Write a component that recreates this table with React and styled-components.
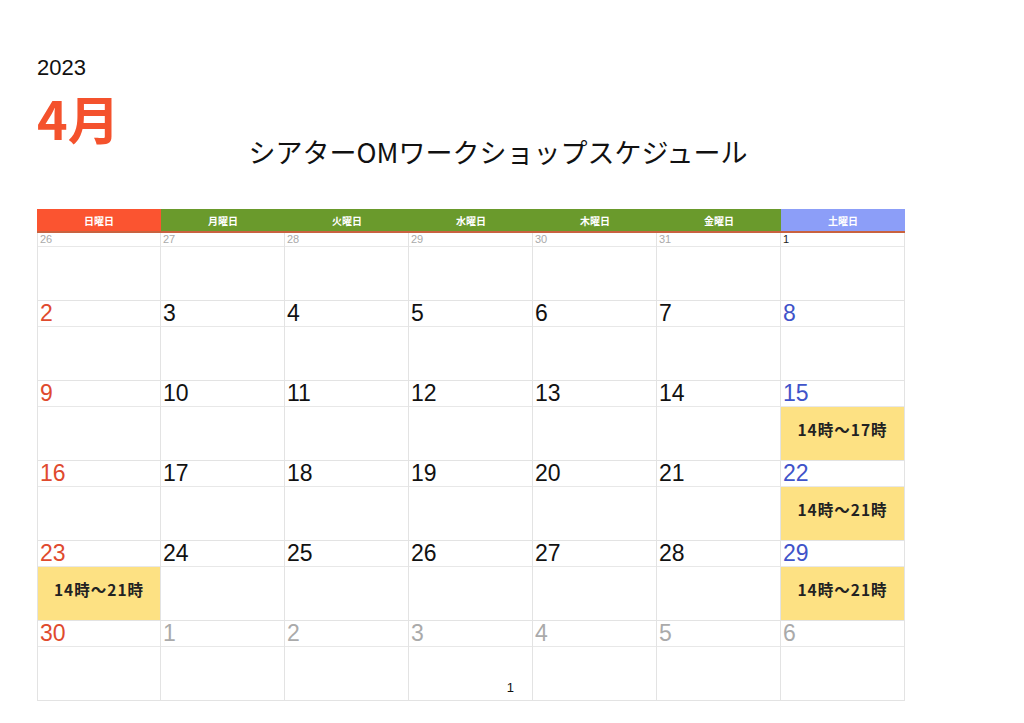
import styled, { createGlobalStyle } from "styled-components";

const GlobalStyle = createGlobalStyle`
  body {
    margin: 0;
    background: #ffffff;
    font-family: "Liberation Sans", "Noto Sans CJK JP", sans-serif;
  }
`;

const Page = styled.div`
  width: 1024px;
  height: 723px;
  padding: 54px 0 0 37px;
  box-sizing: border-box;
  overflow: hidden;
`;

const Year = styled.div`
  font-size: 22px;
  line-height: 28px;
  color: #111;
`;

const Month = styled.div`
  font-family: "Noto Sans CJK JP", sans-serif;
  font-size: 52px;
  font-weight: 700;
  line-height: 60px;
  color: #f4522d;
  margin-top: 6px;
  height: 30px;
`;

const Title = styled.h1`
  margin: 16px 0 0;
  width: 922px;
  text-align: center;
  font-family: "Noto Sans CJK JP", sans-serif;
  font-size: 27px;
  font-weight: 400;
  line-height: 36px;
  color: #111;
`;

const Calendar = styled.div`
  margin-top: 39px;
  width: 868px;
  display: grid;
  grid-template-columns: repeat(7, 124px);
`;

const HeadCell = styled.div`
  height: 22px;
  background: ${(p) => p.bg};
  border-bottom: 2px solid #c9623f;
  color: #fff;
  font-family: "Noto Sans CJK JP", sans-serif;
  font-size: 10px;
  font-weight: 700;
  display: flex;
  align-items: center;
  justify-content: center;
`;

const Cell = styled.div`
  display: flex;
  flex-direction: column;
  border-right: 1px solid #e3e3e3;
  border-bottom: 1px solid #e3e3e3;
  border-left: ${(p) => (p.first ? "1px solid #e3e3e3" : "none")};
`;

const DateRow = styled.div`
  height: ${(p) => (p.small ? "13px" : "25px")};
  border-bottom: 1px solid #e8e8e8;
  padding-left: 2px;
  font-size: ${(p) => (p.small ? "11px" : "23px")};
  line-height: ${(p) => (p.small ? "13px" : "25px")};
  color: ${(p) => p.color};
`;

const EventArea = styled.div`
  height: 53px;
  box-sizing: border-box;
  padding-bottom: 10px;
  background: ${(p) => (p.event ? "#fde183" : "transparent")};
  display: flex;
  align-items: center;
  justify-content: center;
  position: relative;
  font-family: "Noto Sans CJK JP", sans-serif;
  font-size: 15.5px;
  letter-spacing: 1px;
  font-weight: 700;
  color: #222;
`;

const PageNum = styled.span`
  position: absolute;
  right: 18px;
  bottom: 5px;
  font-family: "Liberation Sans", sans-serif;
  font-size: 13px;
  font-weight: 400;
  letter-spacing: 0;
  color: #111;
`;

const heads = [
  { label: "日曜日", bg: "#fb5430" },
  { label: "月曜日", bg: "#6a9a2c" },
  { label: "火曜日", bg: "#6a9a2c" },
  { label: "水曜日", bg: "#6a9a2c" },
  { label: "木曜日", bg: "#6a9a2c" },
  { label: "金曜日", bg: "#6a9a2c" },
  { label: "土曜日", bg: "#8c9ef8" },
];

const weeks = [
  [26, 27, 28, 29, 30, 31, 1],
  [2, 3, 4, 5, 6, 7, 8],
  [9, 10, 11, 12, 13, 14, 15],
  [16, 17, 18, 19, 20, 21, 22],
  [23, 24, 25, 26, 27, 28, 29],
  [30, 1, 2, 3, 4, 5, 6],
];

const events = {
  15: "14時〜17時",
  22: "14時〜21時",
  23: "14時〜21時",
  29: "14時〜21時",
};

const dayColor = (w, d) => {
  if (w === 0) return d === 6 ? "#222" : "#aaa";
  if (w === 5 && d > 0) return "#aaa";
  if (d === 0) return "#df4a2e";
  if (d === 6) return "#4053c9";
  return "#111";
};

export default function App() {
  return (
    <Page>
      <GlobalStyle />
      <Year>2023</Year>
      <Month>4月</Month>
      <Title>シアターOMワークショップスケジュール</Title>
      <Calendar>
        {heads.map((h) => (
          <HeadCell key={h.label} bg={h.bg}>
            {h.label}
          </HeadCell>
        ))}
        {weeks.map((week, w) =>
          week.map((n, d) => {
            const inMonth = !(w === 0 && d < 6) && !(w === 5 && d > 0);
            const ev = inMonth ? events[n] : null;
            return (
              <Cell key={`${w}-${d}`} first={d === 0}>
                <DateRow small={w === 0} color={dayColor(w, d)}>
                  {n}
                </DateRow>
                <EventArea event={!!ev}>
                  {ev}
                  {w === 5 && d === 3 && <PageNum>1</PageNum>}
                </EventArea>
              </Cell>
            );
          })
        )}
      </Calendar>
    </Page>
  );
}
